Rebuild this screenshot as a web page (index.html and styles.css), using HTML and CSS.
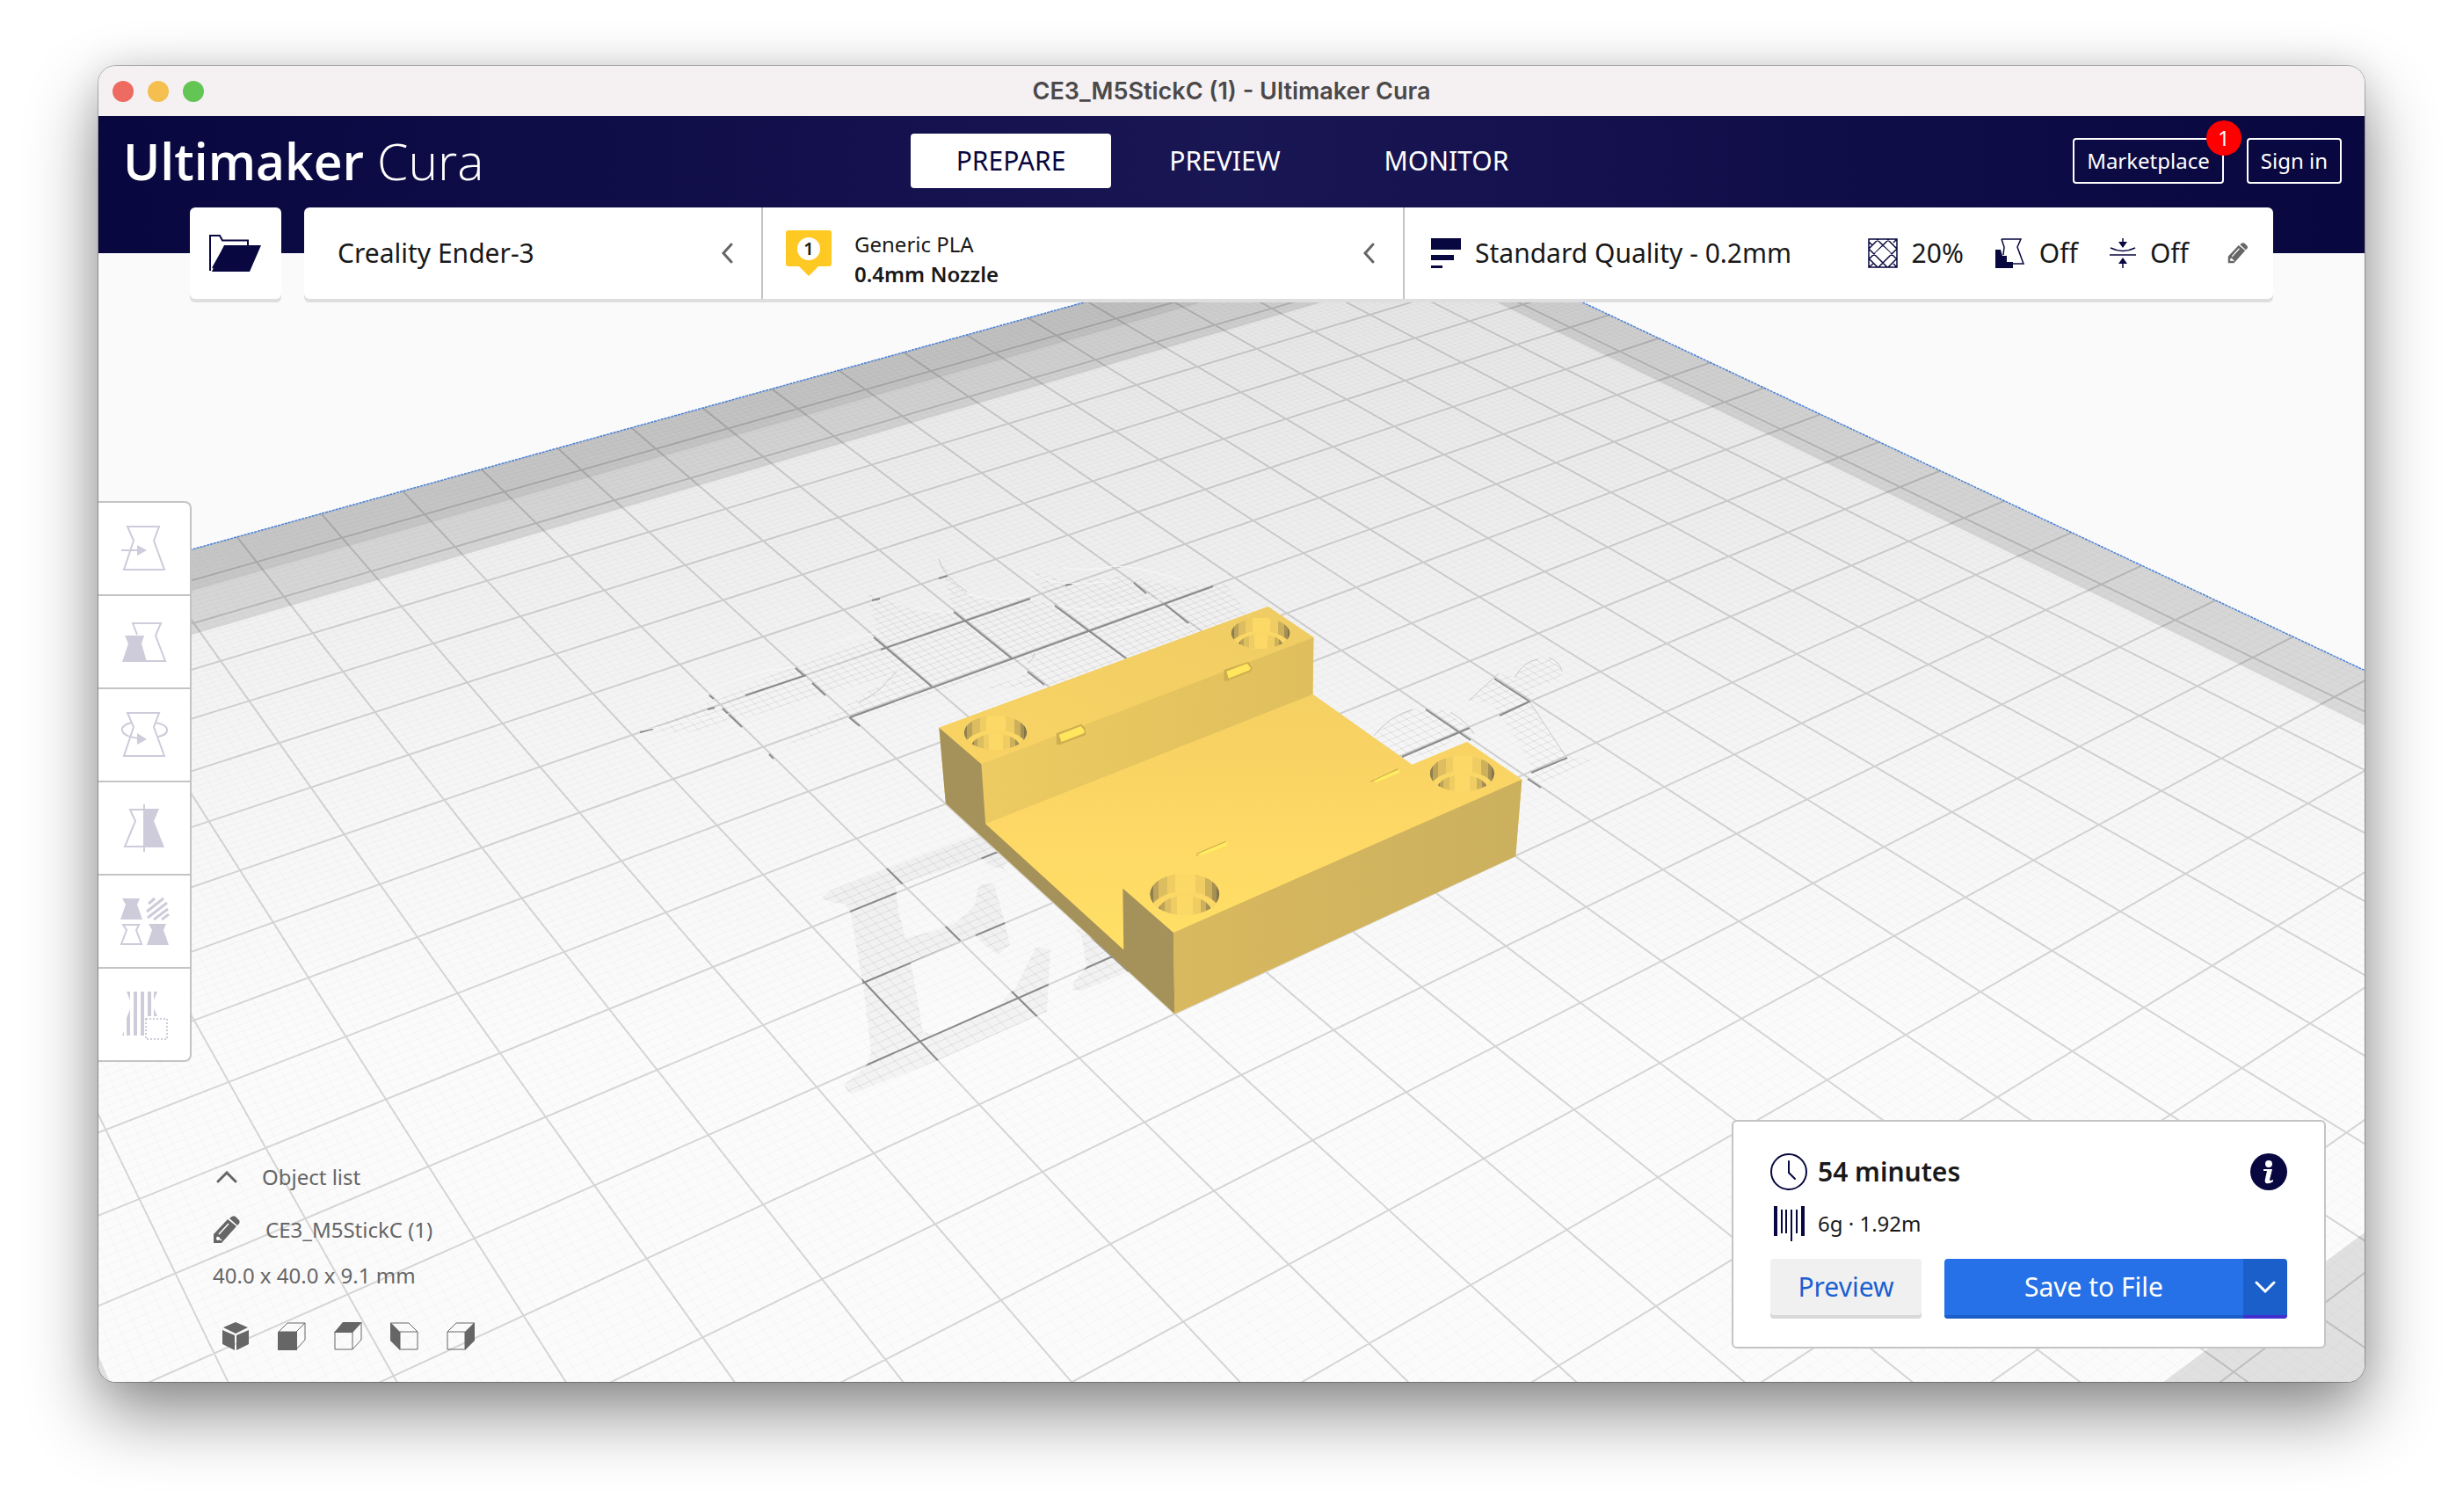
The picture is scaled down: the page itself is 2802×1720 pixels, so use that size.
FILE: index.html
```html
<!DOCTYPE html>
<html lang="en">
<head>
<meta charset="utf-8">
<title>CE3_M5StickC (1) - Ultimaker Cura</title>
<link rel="stylesheet" href="styles.css">
</head>
<body>
<div class="window">
  <div class="titlebar">
    <div class="lights">
      <button class="light light-close" aria-label="Close"></button>
      <button class="light light-minimize" aria-label="Minimize"></button>
      <button class="light light-zoom" aria-label="Zoom"></button>
    </div>
    <h1 class="title">CE3_M5StickC (1) - Ultimaker Cura</h1>
    <div class="lights-balance"></div>
  </div>

  <main class="app">
    <svg class="scene" viewBox="112 132 2578 1440" preserveAspectRatio="xMidYMid slice" aria-hidden="true">
      <defs>
        <linearGradient id="plateShade" gradientUnits="userSpaceOnUse" x1="0" y1="240" x2="0" y2="1180">
          <stop offset="0" stop-color="#dfdfdf"/>
          <stop offset=".12" stop-color="#e6e6e6"/>
          <stop offset=".4" stop-color="#eeeeee"/>
          <stop offset=".65" stop-color="#f5f5f5"/>
          <stop offset="1" stop-color="#fbfbfb"/>
        </linearGradient>
        <linearGradient id="floorShade" x1="0" y1="0" x2="0" y2="1">
          <stop offset="0" stop-color="#f5d062"/>
          <stop offset=".6" stop-color="#fed966"/>
          <stop offset="1" stop-color="#ffe066"/>
        </linearGradient>
        <linearGradient id="rimShade" x1="0" y1="1" x2="1" y2="0">
          <stop offset="0" stop-color="#f9d363"/>
          <stop offset="1" stop-color="#efcc64"/>
        </linearGradient>
        <linearGradient id="wallShade" x1="0" y1="0" x2="1" y2="0">
          <stop offset="0" stop-color="#edcb62"/>
          <stop offset="1" stop-color="#dfbf5d"/>
        </linearGradient>
        <linearGradient id="frontShade" x1="0" y1="0" x2="1" y2="0">
          <stop offset="0" stop-color="#d9b95f"/>
          <stop offset="1" stop-color="#cbb05e"/>
        </linearGradient>
        <linearGradient id="boreShade" x1="0" y1="0" x2="1" y2="0">
          <stop offset="0" stop-color="#8f7f4e"/><stop offset=".05" stop-color="#8f7f4e"/>
          <stop offset=".05" stop-color="#bda35a"/><stop offset=".13" stop-color="#bda35a"/>
          <stop offset=".13" stop-color="#dcbd5f"/><stop offset=".25" stop-color="#dcbd5f"/>
          <stop offset=".25" stop-color="#f0cd63"/><stop offset=".36" stop-color="#f0cd63"/>
          <stop offset=".36" stop-color="#fcd866"/><stop offset=".66" stop-color="#fcd866"/>
          <stop offset=".66" stop-color="#f0cd63"/><stop offset=".8" stop-color="#f0cd63"/>
          <stop offset=".8" stop-color="#cdb05c"/><stop offset=".9" stop-color="#cdb05c"/>
          <stop offset=".9" stop-color="#a58f52"/><stop offset=".96" stop-color="#a58f52"/>
          <stop offset=".96" stop-color="#83744a"/><stop offset="1" stop-color="#83744a"/>
        </linearGradient>
        <clipPath id="boreClip"><circle r="100"/></clipPath>
        <g id="bore" clip-path="url(#boreClip)">
          <circle r="100" fill="url(#boreShade)"/>
          <circle cy="86" r="100" fill="#fbd766"/>
          <circle cy="84" r="77" fill="url(#boreShade)"/>
        </g>
        <path id="letterE" d="M935 1022Q940 1014 955 1009L1017 985L1112 949L1146 981L1141 989L1126 985L1116 976L1019 1008L1022 1036L1030 1067L1063 1059L1088 1049L1109 1030L1113 1008Q1122 1003 1131 1006L1143 1049L1149 1075L1135 1086L1120 1075L1109 1063L1036 1095L1042 1126L1050 1174L1063 1176L1135 1144L1155 1124L1166 1102L1178 1079Q1186 1076 1195 1081L1191 1151L1063 1208L971 1244Q958 1242 962 1232L986 1212L991 1197L982 1122L967 1036L961 1028L948 1027Z"/>
        <path id="letterN" d="M1221 1053L1231 1067L1236 1100L1222 1116L1220 1126L1231 1127L1292 1102Z"/>
        <path id="swirl" d="M726 834L806 800L894 761L1000 725L986 675L1044 695L1085 695L1068 636L1100 676L1132 682L1172 680L1200 690L1175 650L1215 662L1280 655L1340 668L1395 664L1420 700L1200 780L1110 784L1160 772L1176 752L1130 765L1055 790L970 818L880 858L1018 766L850 816L790 832Z"/>
        <path id="letterD" d="M1563 837L1577 822L1603 808L1627 806L1647 808L1677 835L1660 833L1637 857L1593 863Z"/>
        <path id="letterR" d="M1671 797L1700 772Q1712 762 1722 772Q1738 746 1760 749Q1775 752 1777 765L1773 775L1747 780L1740 797L1760 830L1781 860L1812 863L1757 892L1733 887L1742 872L1723 837L1710 818L1697 800Z"/>
        <clipPath id="bigLetters"><use href="#letterE"/></clipPath>
        <clipPath id="secondLetter"><use href="#letterN"/></clipPath>
        <clipPath id="swirlClip"><use href="#swirl"/></clipPath>
        <clipPath id="dClip"><use href="#letterD"/></clipPath>
        <clipPath id="rClip"><use href="#letterR"/></clipPath>
        <path id="minorGrid"/>
        <path id="majorGrid"/>
      </defs>
      <path id="plate" fill="url(#plateShade)"/>
      <use href="#minorGrid" class="grid-minor"/>
      <use href="#majorGrid" class="grid-major"/>
      <path id="noGo" class="no-go"/>
      <path id="noGoBack" class="no-go-back"/>
      <path id="plateEdge" class="plate-edge"/>

      <g clip-path="url(#bigLetters)"><rect class="logo-fill" x="900" y="900" width="400" height="400"/><use href="#minorGrid" class="logo-minor"/><use href="#majorGrid" class="logo-major"/></g>
      <g clip-path="url(#secondLetter)"><rect class="logo-fill" x="1200" y="1000" width="200" height="200"/><use href="#minorGrid" class="logo-minor"/><use href="#majorGrid" class="logo-major"/></g>
      <g clip-path="url(#swirlClip)"><use href="#minorGrid" class="logo-minor"/></g>
      <g clip-path="url(#dClip)"><use href="#minorGrid" class="logo-minor"/></g>
      <g clip-path="url(#rClip)"><use href="#minorGrid" class="logo-minor"/></g>
      <path class="logo-major" d="M728 833L743 829M805 807L813 805M848 791L917 768M992 683L1001 681M1068 658L1078 655M1002 739L1172 681M967 816L1280 703L1380 667M807 791L812 795M822 806L844 827M905 760L915 769M924 777L939 791M994 725L1060 781M966 816L978 826M875 858L880 863M1085 696L1151 749M1169 764L1188 779M1200 689L1281 749M1290 663L1304 675M1325 687L1352 709M1212 666L1220 664M1700 772L1740 798L1706 814M1622 807L1673 842M1595 861L1672 828M1742 879L1783 862M1738 886L1753 896"/>
      <path class="logo-outline" d="M1068 636Q1072 655 1100 673M977 800L1000 785L1020 764M1169 755Q1176 750 1177 743M1563 837Q1580 815 1607 807M1650 810Q1670 822 1677 835M1671 797L1705 766M1723 771Q1733 752 1750 750M1762 748Q1774 752 1777 764M1740 798L1781 860"/>
      <path class="logo-glint" d="M1100 676Q1135 686 1170 678M1040 690Q1060 698 1085 696M1210 646Q1240 650 1260 645T1345 660M1165 648Q1200 672 1270 660M1205 690Q1260 700 1320 682M795 793Q850 762 905 759M730 831Q790 818 830 812M940 735Q975 722 1000 720"/>

      <g transform="translate(1040 660) scale(.4719 .3333)" shape-rendering="geometricPrecision">
        <path fill="#f8d365" d="M60 503L853 90L963 195L961 390L1200 630L1333 552L1465 680L1450 942L628 1480L76 762Z"/>
        <path fill="url(#rimShade)" d="M60 503L853 90L963 195L162 628Z"/>
        <path fill="url(#wallShade)" d="M162 628L963 195L961 390L172 832Z"/>
        <path fill="url(#floorShade)" d="M172 832L961 390L1200 630L1333 552L1465 680L625 1203L503 1052L505 1262Z"/>
        <path fill="#a5925a" d="M60 503L162 628L172 832L505 1262L503 1052L625 1203L628 1480L76 762Z"/>
        <path fill="url(#frontShade)" d="M625 1203L1465 680L1450 942L628 1480Z"/>
        <use href="#bore" transform="translate(196 520) scale(.76 .59)"/>
        <use href="#bore" transform="translate(835 181) scale(.71 .53)"/>
        <use href="#bore" transform="translate(1321 660) scale(.78 .62)"/>
        <use href="#bore" transform="translate(652 1072) scale(.84 .72)"/>
        <path fill="#cdaf50" d="M343 523L403 491L412 505L414 528L350 562L343 560ZM747 306L806 278L815 300L812 312L752 345L747 342Z"/>
        <path fill="#ffe65c" d="M349 527L402 498L410 512V522L355 552ZM753 311L803 284L811 300L809 307L758 335Z"/>
        <path fill="#ffec60" d="M1108 680L1170 647V658L1112 691ZM690 930L755 893V905L690 941Z"/>
        <path fill="none" stroke="#b89b48" stroke-width="2" d="M1100 688L1166 644M682 942V933L751 892"/>
      </g>
    </svg>

    <header class="header">
      <div class="logo"><strong>Ultimaker</strong> <span>Cura</span></div>
      <nav class="stages">
        <button class="stage stage-active">PREPARE</button>
        <button class="stage">PREVIEW</button>
        <button class="stage">MONITOR</button>
      </nav>
      <div class="account">
        <button class="outline-button">Marketplace<span class="badge">1</span></button>
        <button class="outline-button">Sign in</button>
      </div>
    </header>

    <section class="toolbar">
      <button class="open-file" aria-label="Open file">
        <svg width="60" height="42" viewBox="0 0 60 42"><path d="M1 41V1H12L15 6.500H44V13H18L4 38" fill="none" stroke="#08073f" stroke-width="2"/><path d="M17 12H59L46 42H3Z" fill="#08073f"/></svg>
      </button>
      <div class="config">
        <button class="panel panel-printer">
          <span class="label">Creality Ender-3</span>
          <svg class="chevron" viewBox="0 0 14 24"><path d="M12 2L3 12L12 22"/></svg>
        </button>
        <button class="panel panel-material">
          <svg class="extruder" viewBox="0 0 52 52"><path fill="#ffc924" d="M3 0H49Q52 0 52 3V38Q52 41 49 41H37L26 52L15 41H3Q0 41 0 38V3Q0 0 3 0Z"/><circle cx="26" cy="21" r="13" fill="#fff"/><text x="26" y="28" text-anchor="middle">1</text></svg>
          <span class="material"><span>Generic PLA</span><strong>0.4mm Nozzle</strong></span>
          <svg class="chevron" viewBox="0 0 14 24"><path d="M12 2L3 12L12 22"/></svg>
        </button>
        <button class="panel panel-settings">
          <svg class="icon34" viewBox="0 0 34 34"><path fill="#08073f" d="M0 0H34V13H0ZM0 19H26V25H0ZM0 31H13V34H0Z"/></svg>
          <span class="label label-grow">Standard Quality - 0.2mm</span>
          <span class="setting">
            <svg class="icon34" viewBox="0 0 34 34"><path class="line-fine" d="M1 1H33V33H1ZM1 12L12 1M1 24L24 1M12 33L33 12M23 33L33 23M22 1L33 12M10 1L33 24M1 12L22 33M1 23L11 33M5 8L1 4M29 29L33 33M6 29L1 33M29 5L33 1"/><path d="M17 9L26 17L17 26L8 17Z" fill="#fff"/></svg>
            <span class="label">20%</span>
          </span>
          <span class="setting">
            <svg class="icon34" viewBox="0 0 34 34"><path fill="#08073f" d="M0 13H6L8 20H13V27H20V34H0Z"/><path class="line-fine" d="M7 1H29L25 10L32 29H20M7 1L10 10L9 19"/></svg>
            <span class="label">Off</span>
          </span>
          <span class="setting">
            <svg class="icon30" viewBox="0 0 30 34"><path class="line-fine" d="M1 11Q15 18 29 11M0 19H30M15 0V6M15 28V34"/><path fill="#08073f" d="M10 4H20L15 11ZM10 29H20L15 22Z"/></svg>
            <span class="label">Off</span>
          </span>
          <svg class="pencil-small" viewBox="0 0 32 32"><use href="#pencil"/></svg>
        </button>
      </div>
    </section>

    <div class="workspace">
      <div class="tools">
        <button class="tool" disabled aria-label="Move"><svg viewBox="0 0 52 52"><path class="t-line" d="M7 1H43L37 17L49 50H3L14 17ZM0 28H20"/><path class="t-fill" d="M18 22L29 28L18 34Z"/></svg></button>
        <button class="tool" disabled aria-label="Scale"><svg viewBox="0 0 52 52"><path class="t-line" d="M28 48H50L39 19L45 5H13L18 18"/><path class="t-fill" d="M4 19H26L23 28L29 49H1L8 28Z"/></svg></button>
        <button class="tool" disabled aria-label="Rotate"><svg viewBox="0 0 52 52"><path class="t-line" d="M7 1H43L37 17L49 50H3L14 17ZM12 12C-4 15-4 27 20 30M39 12C56 15 56 25 42 28"/><path class="t-fill" d="M18 24L29 31L18 37Z"/></svg></button>
        <button class="tool" disabled aria-label="Mirror"><svg viewBox="0 0 52 52"><path class="t-line" d="M26 5H10L16 18L4 47H26M26 -1V53"/><path class="t-fill" d="M26 4H43L37 18L49 48H26Z"/></svg></button>
        <button class="tool" disabled aria-label="Per model settings"><svg viewBox="0 0 52 52"><path class="t-fill" d="M1 0H21L18 7L24 24H-1L5 7ZM31 29H51L48 36L54 53H29L35 36Z"/><path class="t-line" d="M2 30H20L17 36L23 52H0L6 36Z"/><path class="t-line t-hatch" d="M31 6L38 0M29 15L48 0M30 22L52 5M37 24L53 12M46 24L54 18"/></svg></button>
        <button class="tool" disabled aria-label="Support blocker"><svg viewBox="0 0 52 52"><path class="t-fill" d="M6 0H10V10ZM10 20V50H6V30ZM14 0H18V50H14ZM22 0H26V50H22ZM30 0H34V28H30ZM37 0H41L37 10ZM37 19L41 28H37ZM1 50L3 45V50Z"/><rect class="t-line t-dotted" x="28" y="31" width="24" height="23"/></svg></button>
      </div>

      <div class="bottom">
        <section class="objects">
          <button class="object-toggle">
            <svg width="24" height="14" viewBox="0 0 24 14"><path d="M2 12L12 2L22 12"/></svg>
            Object list
          </button>
          <div class="object-name">
            <svg width="32" height="32" viewBox="0 0 32 32"><g id="pencil"><path fill="#666" d="M1 31V21L17 4L27 12L10 31ZM19 3Q23-1 26 1L30 5Q32 8 28 11Z"/><path d="M7 21L18 9M5 24L10 28" fill="none" stroke="#fff" stroke-width="1.500"/><circle cx="6" cy="26" r="2" fill="#fff"/></g></svg>
            <span>CE3_M5StickC (1)</span>
          </div>
          <p class="dimensions">40.0 x 40.0 x 9.1 mm</p>
          <div class="views">
            <button aria-label="3D view"><svg viewBox="0 0 32 32"><path class="v-fill" d="M16 0L30 6L16 13L2 6ZM1 9L15 15V32L1 25ZM31 9L17 15V32L31 25Z"/></svg></button>
            <button aria-label="Front view"><svg viewBox="0 0 32 32"><path class="v-line" d="M1 11L11 1H31L21 11ZM31 1V20L21 31"/><path class="v-fill" d="M0 11H22V32H0Z"/></svg></button>
            <button aria-label="Top view"><svg viewBox="0 0 32 32"><path class="v-line" d="M1 11H21V31H1ZM31 1V20L21 31"/><path class="v-fill" d="M0 12L10 0H32L21 12Z"/></svg></button>
            <button aria-label="Left view"><svg viewBox="0 0 32 32"><path class="v-line" d="M11 11H31V31H11ZM1 1H21L31 11"/><path class="v-fill" d="M0 0L11 11V32L0 21Z"/></svg></button>
            <button aria-label="Right view"><svg viewBox="0 0 32 32"><path class="v-line" d="M1 11H21V31H1ZM1 11L11 1H31"/><path class="v-fill" d="M32 0L21 11V32L32 21Z"/></svg></button>
          </div>
        </section>

        <section class="action">
          <div class="row">
            <svg width="42" height="42" viewBox="0 0 42 42"><circle class="line-navy" cx="21" cy="21" r="20"/><path class="line-navy" stroke-linecap="round" d="M21 9V22L28 29"/></svg>
            <strong class="time">54 minutes</strong>
            <button class="info" aria-label="Print details"><svg width="42" height="42" viewBox="0 0 42 42"><circle cx="21" cy="21" r="21" fill="#08073f"/><circle cx="21" cy="12" r="4" fill="#fff"/><path fill="#fff" d="M15 18H25L22 30Q22 32 26 30V32Q22 35 18 34Q16 33 17 29L19 20H15Z"/></svg></button>
          </div>
          <div class="row row-usage">
            <svg width="42" height="40" viewBox="0 0 42 40"><path fill="#08073f" d="M4 0H8V34H4ZM35 0H39V34H35ZM12 4H14V31H12ZM17 4H19V31H17ZM23 4H25V40H23ZM29 4H31V31H29Z"/></svg>
            <span>6g · 1.92m</span>
          </div>
          <div class="buttons">
            <button class="preview">Preview</button>
            <div class="save-group">
              <button class="save">Save to File</button>
              <button class="save-more" aria-label="More outputs"><svg width="24" height="14" viewBox="0 0 24 14"><path d="M2 2L12 12L22 2"/></svg></button>
            </div>
          </div>
        </section>
      </div>
    </div>
  </main>
</div>
<script src="scene.js"></script>
</body>
</html>
```
FILE: styles.css
```css
* { box-sizing: border-box; }

body {
  margin: 0;
  min-height: 100vh;
  padding: 75px 112px 148px;
  display: flex;
  background: #fff;
  color: #191919;
  font-family: "Noto Sans", "Open Sans", sans-serif;
  font-size: 24px;
  line-height: 34px;
}

button {
  margin: 0;
  padding: 0;
  border: 0;
  background: none;
  color: inherit;
  font: inherit;
  cursor: pointer;
}

strong { font-weight: 600; }

svg { display: block; flex: none; }

.window {
  flex: 1;
  display: flex;
  flex-direction: column;
  border-radius: 20px;
  overflow: hidden;
  background: #fafafa;
  box-shadow: 0 0 0 1px rgba(0, 0, 0, .25), 0 0 40px rgba(0, 0, 0, .1), 0 36px 80px rgba(0, 0, 0, .45);
}

/* Title bar */
.titlebar {
  height: 57px;
  padding: 0 16px;
  display: flex;
  align-items: center;
  justify-content: space-between;
  background: #f5f1f2;
}
.lights { display: flex; gap: 16px; width: 104px; }
.lights-balance { width: 104px; }
.light { width: 24px; height: 24px; border-radius: 50%; }
.light-close { background: #ed6b60; }
.light-minimize { background: #f5bf4f; }
.light-zoom { background: #62c554; }
.title {
  margin: 0;
  font: 600 27px/34px Inter, sans-serif;
  color: #4b494a;
}

/* Main area */
.app { flex: 1; display: flex; flex-direction: column; position: relative; }
.scene { position: absolute; top: 0; left: 0; width: 100%; height: 100%; }

.header {
  position: relative;
  height: 156px;
  padding: 0 26px 54px 28px;
  display: grid;
  grid-template-columns: 1fr auto 1fr;
  align-items: center;
  background: linear-gradient(90deg, #08073f, #191654 50%, #08073f);
  color: #fff;
}
.logo { font: 300 57px/60px "Open Sans", "Noto Sans", sans-serif; }
.stages { display: flex; gap: 14px; }
.stage {
  height: 62px;
  padding: 0 52px;
  border-radius: 4px;
  font-size: 30px;
}
.stage-active { background: #fff; color: #08073f; }
.account { display: flex; justify-content: flex-end; gap: 26px; }
.outline-button {
  position: relative;
  height: 52px;
  padding: 0 14px;
  border: 2px solid #fff;
  border-radius: 4px;
}
.badge {
  position: absolute;
  top: -22px;
  right: -22px;
  width: 40px;
  height: 40px;
  border-radius: 50%;
  background: #f00;
  line-height: 40px;
}

/* Configuration toolbar */
.toolbar {
  position: relative;
  margin: -52px 104px 0;
  height: 104px;
  display: flex;
  gap: 26px;
}
.open-file {
  width: 104px;
  display: flex;
  align-items: center;
  justify-content: center;
  border-radius: 6px;
  background: #fff;
  box-shadow: 0 4px #dedede;
}
.config {
  flex: 1;
  display: grid;
  grid-template-columns: 520fr 730fr 990fr;
  border-radius: 6px;
  background: #fff;
  box-shadow: 0 4px #dedede;
}
.panel {
  display: flex;
  align-items: center;
  text-align: left;
}
.panel + .panel { border-left: 2px solid #c4c4c4; }
.panel-printer { justify-content: space-between; padding: 0 32px 0 38px; }
.panel-material { padding: 0 32px 0 26px; gap: 26px; }
.panel-settings { padding: 0 28px 0 30px; gap: 16px; }
.label { font-size: 30px; line-height: 40px; }
.label-grow { flex: 1; }
.material { flex: 1; display: flex; flex-direction: column; padding-top: 14px; }
.setting { display: flex; align-items: center; gap: 16px; margin-right: 20px; }
.chevron { width: 14px; height: 24px; fill: none; stroke: #666; stroke-width: 3; stroke-linecap: round; }
.extruder { width: 52px; height: 52px; font-size: 20px; font-weight: 600; fill: #191919; }
.icon34 { width: 34px; height: 34px; }
.icon30 { width: 30px; height: 34px; }
.pencil-small { width: 24px; height: 24px; margin-left: 8px; }
.line-navy { fill: none; stroke: #08073f; stroke-width: 2; }
.line-fine { fill: none; stroke: #08073f; stroke-width: 1.5; }

/* Workspace */
.workspace {
  position: relative;
  flex: 1;
  display: flex;
  flex-direction: column;
  justify-content: space-between;
  align-items: flex-start;
  padding: 230px 44px 36px 0;
}
.tools {
  display: flex;
  flex-direction: column;
  border: 2px solid #c4c4c4;
  border-left: 0;
  border-radius: 0 8px 8px 0;
  overflow: hidden;
  background: #c4c4c4;
  gap: 2px;
}
.tool {
  width: 104px;
  height: 104px;
  display: flex;
  align-items: center;
  justify-content: center;
  background: #fff;
}
.tool svg { width: 52px; height: 52px; overflow: visible; }
.t-line { fill: none; stroke: #cecbda; stroke-width: 2; }
.t-fill { fill: #cecbda; }
.t-hatch { stroke-width: 3; }
.t-dotted { stroke-dasharray: 2 2; }

.bottom {
  align-self: stretch;
  display: flex;
  justify-content: space-between;
  align-items: flex-end;
}
.objects {
  margin-left: 130px;
  display: flex;
  flex-direction: column;
  align-items: flex-start;
  color: #666;
}
.object-toggle { display: flex; align-items: center; gap: 28px; padding-left: 4px; }
.object-toggle svg, .save-more svg { fill: none; stroke: #666; stroke-width: 3; stroke-linecap: round; }
.object-name { display: flex; align-items: center; gap: 28px; margin-top: 26px; }
.dimensions { margin: 18px 0 0; }
.views { display: flex; gap: 32px; margin: 36px 0 0 10px; }
.views svg { width: 32px; height: 32px; }
.v-line { fill: none; stroke: #666; stroke-width: 1; }
.v-fill { fill: #666; }

/* Print job card */
.action {
  width: 676px;
  margin-bottom: 2px;
  padding: 36px 42px 32px;
  border: 2px solid #c4c4c4;
  border-radius: 6px;
  background: #fff;
}
.row { display: flex; align-items: center; gap: 12px; }
.row-usage { margin-top: 18px; }
.time { flex: 1; font-size: 30px; line-height: 42px; }
.buttons { display: flex; gap: 26px; margin-top: 20px; font-size: 30px; }
.preview {
  width: 172px;
  height: 68px;
  padding-bottom: 4px;
  border-radius: 4px;
  background: #f0f0f0;
  color: #1960d0;
  box-shadow: inset 0 -4px #d8d8d8;
}
.save-group { flex: 1; display: flex; border-radius: 4px; overflow: hidden; }
.save { flex: 1; padding-bottom: 4px; background: #2671e7; color: #fff; box-shadow: inset 0 -4px #1b5dc9; }
.save-more {
  width: 50px;
  padding-bottom: 4px;
  display: flex;
  align-items: center;
  justify-content: center;
  background: #1b5fca;
  box-shadow: inset 0 -4px #4130d0;
}
.save-more svg { stroke: #fff; }

/* Build plate */
.grid-minor { fill: none; stroke: rgba(0, 0, 0, .026); stroke-width: 1px; }
.grid-major { fill: none; stroke: rgba(0, 0, 0, .15); stroke-width: 2px; }
.no-go { fill: rgba(0, 0, 0, .105); }
.no-go-back { fill: rgba(0, 0, 0, .065); }
.plate-edge { fill: none; stroke: #4a80d8; stroke-width: 1.5px; stroke-dasharray: 3 1; }
.logo-fill { fill: rgba(0, 0, 0, .032); }
.logo-minor { fill: none; stroke: rgba(0, 0, 0, .055); stroke-width: 1px; }
.logo-major { fill: none; stroke: #8b8b8d; stroke-width: 2px; }
.logo-outline { fill: none; stroke: #c8c8c8; stroke-width: 1px; }
.logo-glint { fill: none; stroke: #f9f9f9; stroke-width: 1px; }
```
FILE: scene.js
```js
// Projects build plate coordinates (in centimetres, from the model's front corner) onto the view.
function project(i, j) {
  var w = 1 + 0.0236 * i + 0.03187 * j;
  var x = (1336.4 + 137.52 * i - 30.84 * j) / w;
  var y = (1153.3 - 21.9 * i - 30.55 * j) / w;
  return x.toFixed(1) + ' ' + y.toFixed(1);
}

var MIN = -9.75;
var MAX = 13.75;

function line(i1, j1, i2, j2) {
  return 'M' + project(i1, j1) + 'L' + project(i2, j2);
}

function area(i1, j1, i2, j2) {
  return 'M' + [project(i1, j1), project(i2, j1), project(i2, j2), project(i1, j2)].join('L') + 'Z';
}

function setPath(id, d) {
  document.getElementById(id).setAttribute('d', d);
}

var minor = '';
var major = '';
for (var n = -97; n <= 137; n++) {
  var p = n / 10;
  var d = line(p, MIN, p, MAX) + line(MIN, p, MAX, p);
  if (n % 10 === 0) {
    major += d;
  } else {
    minor += d;
  }
}
setPath('minorGrid', minor);
setPath('majorGrid', major);
setPath('plate', area(MIN, MIN, MAX, MAX));
setPath('noGo',
  area(MIN, 11.75, 12.75, MAX) +
  area(12.75, -7.75, MAX, MAX) +
  area(MIN, MIN, MAX, -7.75) +
  area(MIN, -7.75, -8.7, 11.75));
setPath('noGoBack', area(MIN, 12.75, MAX, MAX));
setPath('plateEdge', line(MIN, MAX, MAX, MAX) + line(MAX, MAX, MAX, MIN));
```
